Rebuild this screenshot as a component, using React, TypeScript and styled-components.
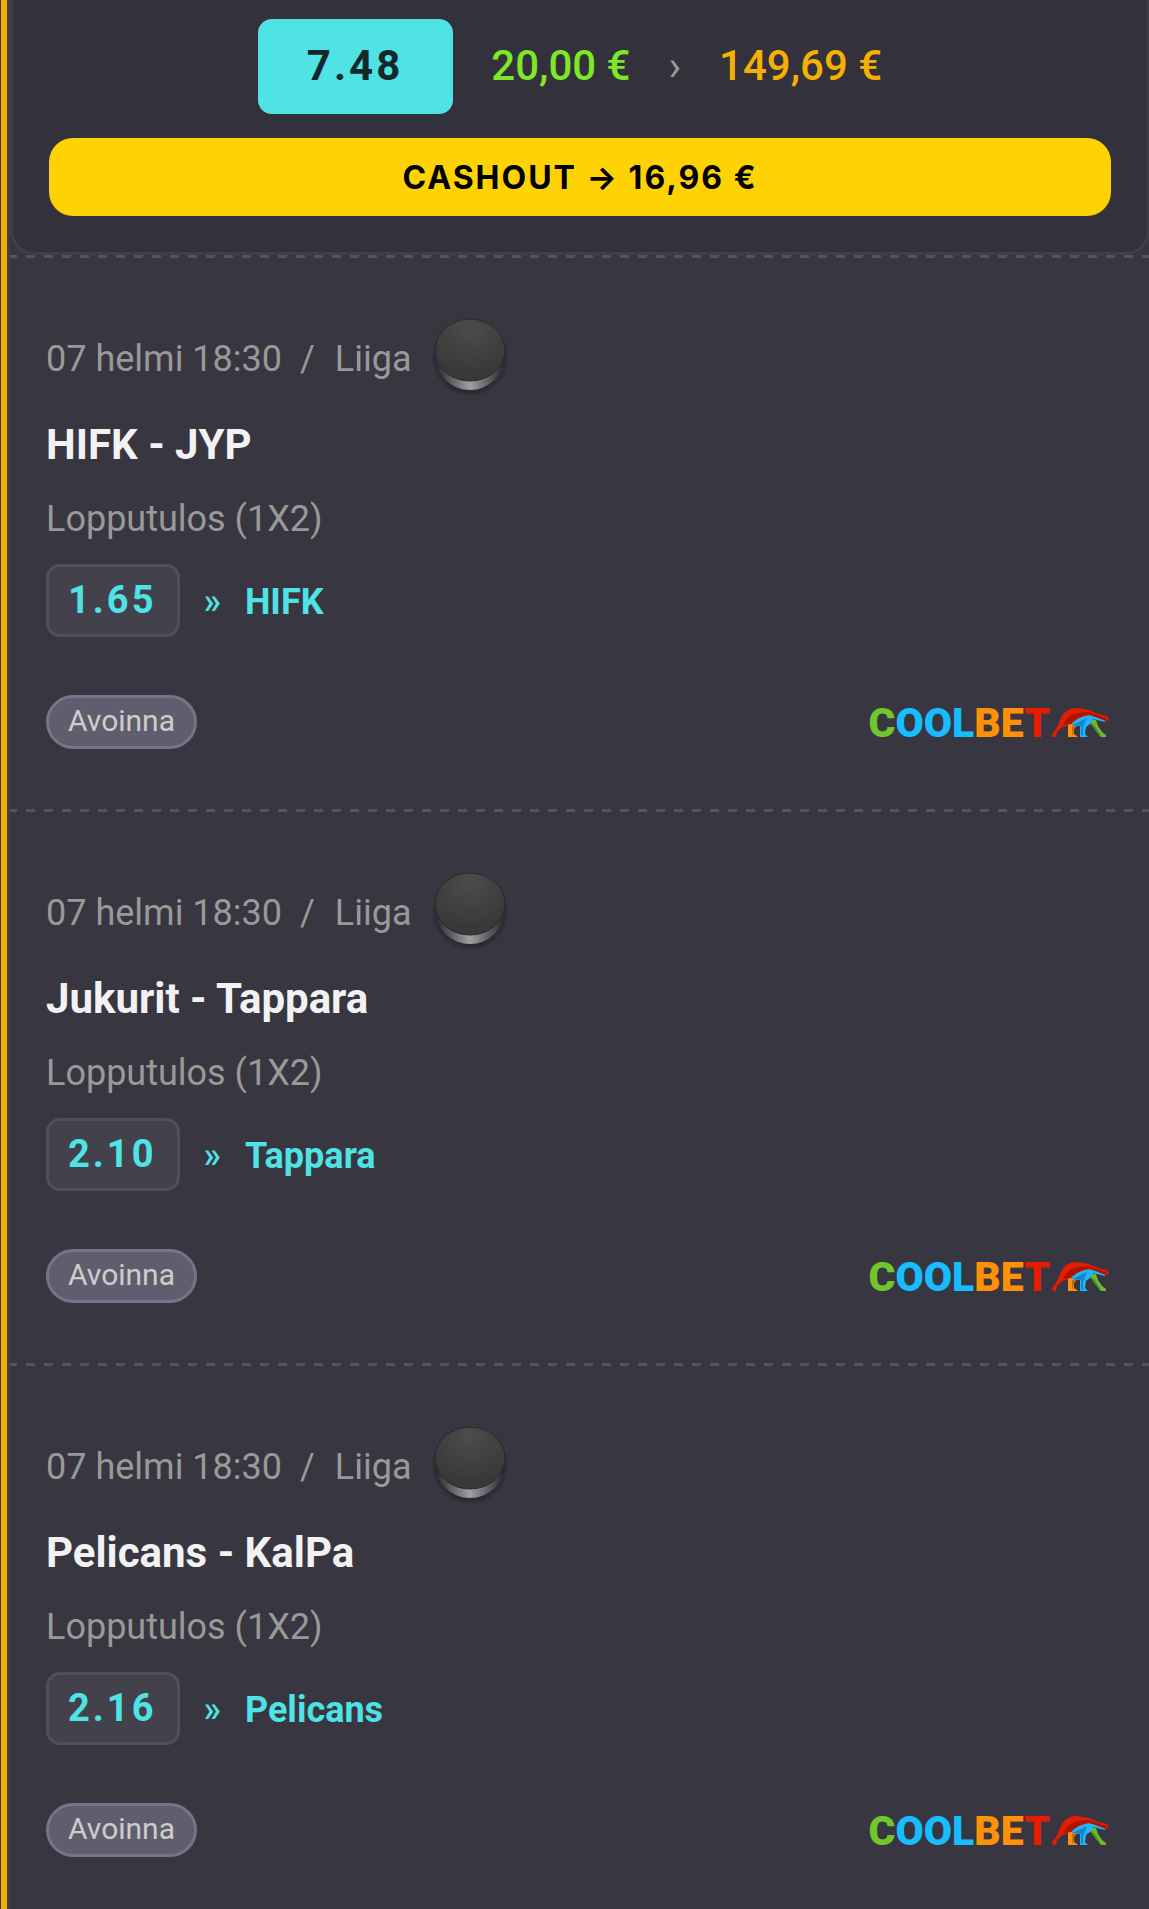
import React from 'react';
import styled, { createGlobalStyle } from 'styled-components';

const GlobalStyle = createGlobalStyle`
  * { box-sizing: border-box; }
  body {
    margin: 0;
    background: #373641;
    color: #9b9998;
    font-family: Roboto, "Open Sans", sans-serif;
    overflow-x: hidden;
  }
`;

const Slip = styled.main`
  display: flex;
  min-height: 100vh;
  margin-left: 1px;
  border-left: 6px solid #f5ae00;
  overflow: hidden;
`;

const SlipBody = styled.div`
  flex: 1;
  min-width: 0;
  border-left: 3px solid #3f3e4a;
`;

const Summary = styled.section`
  display: flex;
  flex-direction: column;
  gap: 24px;
  margin-right: -1px;
  padding: 19px 36px 36px;
  background: #32313c;
  border: 3px solid #3f3e4a;
  border-top: 0;
  border-radius: 0 0 24px 24px;
`;

const Totals = styled.div`
  display: flex;
  align-items: baseline;
  justify-content: center;
  gap: 38px;
  padding-right: 20px;
  font-size: 42px;
  line-height: 48px;
  font-weight: 500;
`;

const TotalOdds = styled.span`
  padding: 23px 50px 24px 49px;
  border-radius: 14px;
  background: #50e3e6;
  color: #14282c;
  font-weight: 700;
  letter-spacing: 3px;
`;

const Amount = styled.span<{ $color: string }>`
  color: ${(p) => p.$color};
`;

const Chevron = styled.span`
  color: #9b9998;
  font-weight: 400;
`;

const CashoutButton = styled.button`
  height: 78px;
  padding: 2px 24px 0;
  border: 0;
  border-radius: 24px;
  background: #ffd204;
  color: #000;
  font: 700 32px/40px Inter, sans-serif;
  letter-spacing: 2px;
  cursor: pointer;
`;

const Selection = styled.article`
  padding: 58px 40px 60px 36px;
  background: repeating-linear-gradient(90deg, #54535f 0 9px, transparent 9px 18px) -2px 0 / calc(100% + 18px) 3px no-repeat;

  &:last-child { padding-bottom: 48px; }
`;

const Meta = styled.div`
  display: flex;
  align-items: flex-start;
  font-size: 36px;
  line-height: 42px;
`;

const MetaText = styled.span`
  padding-top: 25px;
`;

const Slash = styled.span`
  margin: 0 20px 0 18px;
`;

const Puck = styled.svg`
  width: 84px;
  height: 84px;
  margin-left: 15px;
`;

const Teams = styled.h2`
  margin: 24px 0 0;
  color: #f2f2f2;
  font-size: 42px;
  line-height: 48px;
  font-weight: 700;
`;

const Market = styled.p`
  margin: 29px 0 0;
  font-size: 36px;
  line-height: 42px;
`;

const Pick = styled.div`
  display: flex;
  align-items: center;
  margin-top: 24px;
  color: #50e3e6;
  font-size: 36px;
  line-height: 42px;
  font-weight: 700;
`;

const Odds = styled.span`
  padding: 12px 21px 13px 19px;
  border: 3px solid #504f5d;
  border-radius: 14px;
  background: #42414c;
  font-size: 38px;
  letter-spacing: 3px;
`;

const PickText = styled.span`
  padding-top: 2px;
`;

const Arrow = styled(PickText)`
  margin: 0 24px 0 23px;
  font-weight: 500;
`;

const Footer = styled.footer`
  display: flex;
  align-items: center;
  justify-content: space-between;
  margin-top: 58px;
`;

const Status = styled.span`
  padding: 6px 19px 8px;
  border: 3px solid #777489;
  border-radius: 27px;
  background: #5f5d6e;
  color: #cfcdca;
  font-size: 30px;
  line-height: 34px;
`;

const Brand = styled.div`
  display: flex;
  align-items: center;
  padding-top: 2px;
  font-size: 41px;
  line-height: 48px;
  font-weight: 900;
`;

const Letters = styled.span<{ $color: string }>`
  color: ${(p) => p.$color};
`;

const LizardMark = styled.svg`
  width: 57px;
  height: 30px;
  margin-left: 2px;
`;

const bets = [
  { teams: 'HIFK - JYP', odds: '1.65', pick: 'HIFK' },
  { teams: 'Jukurit - Tappara', odds: '2.10', pick: 'Tappara' },
  { teams: 'Pelicans - KalPa', odds: '2.16', pick: 'Pelicans' },
];

function PuckIcon({ id }: { id: string }) {
  return (
    <Puck viewBox="0 0 84 84" aria-hidden="true">
      <defs>
        <radialGradient id={`${id}-top`} cx="50%" cy="15%" r="75%">
          <stop offset="0" stopColor="#4c4c4d" />
          <stop offset="1" stopColor="#383838" />
        </radialGradient>
        <linearGradient id={`${id}-side`}>
          <stop offset="0" stopColor="#27272b" />
          <stop offset="0.2" stopColor="#55555a" />
          <stop offset="0.5" stopColor="#a0a0a4" />
          <stop offset="0.8" stopColor="#55555a" />
          <stop offset="1" stopColor="#27272b" />
        </linearGradient>
        <radialGradient id={`${id}-shade`}>
          <stop offset="0.8" stopColor="#202027" stopOpacity="0.8" />
          <stop offset="1" stopColor="#202027" stopOpacity="0" />
        </radialGradient>
      </defs>
      <circle cx="43" cy="45" r="39" fill={`url(#${id}-shade)`} />
      <ellipse cx="43" cy="43" rx="35" ry="34" fill={`url(#${id}-side)`} />
      <ellipse cx="43" cy="37" rx="35" ry="31" fill={`url(#${id}-top)`} stroke="#29292c" strokeWidth="1" />
    </Puck>
  );
}

function Lizard() {
  return (
    <LizardMark viewBox="0 0 57 30" aria-hidden="true">
      <path fill="#69bd2d" d="M37 11 44 12 46 18 50 24 54 27 54 29 49 29 44 23 38 15Z" />
      <path fill="#4b8f1f" d="M38 14 42 17 48 26 48 28 44 23Z" />
      <path fill="#ff910a" d="M16 16 26 16 22 21 22 26 26 29 16 29Z" />
      <path fill="#c26b08" d="M20 18 25 17 22 21 21 27 20 27Z" />
      <path fill="#1fb6ff" d="M19 17C22 11 29 8 38 7L54 12 53 14 41 11 38 16 34 19 33 26 36 29 28 29 28 18Z" />
      <path fill="#1486cf" d="M20 17 35 10 31 20 31 28 29 27 29 18Z" />
      <path fill="#e41c00" d="M0 26C4 22 6 17 9 10 12 3 18 0 25 0L37 2 46 6 55 8 57 12 54 13 44 9 36 7 27 10 18 16 9 20 5 24 4 29 1 29Z" />
      <path fill="#a91602" d="M11 17C14 10 19 6 26 5L36 4 51 9 55 10 54 13 36 6 26 10 17 16Z" />
    </LizardMark>
  );
}

function Coolbet() {
  return (
    <Brand>
      <span>
        <Letters $color="#70c72c">C</Letters>
        <Letters $color="#18bdff">OOL</Letters>
        <Letters $color="#ff9108">BE</Letters>
        <Letters $color="#e41c00">T</Letters>
      </span>
      <Lizard />
    </Brand>
  );
}

export default function App() {
  return (
    <>
      <GlobalStyle />
      <Slip>
        <SlipBody>
          <Summary>
            <Totals>
              <TotalOdds>7.48</TotalOdds>
              <Amount $color="#7ee827">20,00 €</Amount>
              <Chevron>›</Chevron>
              <Amount $color="#f5b000">149,69 €</Amount>
            </Totals>
            <CashoutButton type="button">CASHOUT → 16,96 €</CashoutButton>
          </Summary>
          {bets.map((bet, i) => (
            <Selection key={bet.teams}>
              <Meta>
                <MetaText>07 helmi 18:30<Slash>/</Slash>Liiga</MetaText>
                <PuckIcon id={`puck-${i}`} />
              </Meta>
              <Teams>{bet.teams}</Teams>
              <Market>Lopputulos (1X2)</Market>
              <Pick>
                <Odds>{bet.odds}</Odds>
                <Arrow>»</Arrow>
                <PickText>{bet.pick}</PickText>
              </Pick>
              <Footer>
                <Status>Avoinna</Status>
                <Coolbet />
              </Footer>
            </Selection>
          ))}
        </SlipBody>
      </Slip>
    </>
  );
}
